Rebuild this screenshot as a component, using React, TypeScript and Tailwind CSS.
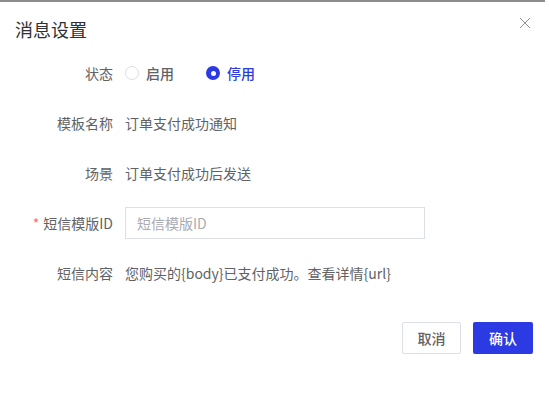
import React from 'react';

const font = { fontFamily: '"Noto Sans CJK SC", "Noto Sans", sans-serif' };

const FormRow: React.FC<{ label: string; required?: boolean; children: React.ReactNode }> = ({ label, required, children }) => (
    <div className="flex items-center h-8 mb-[18px]">
        <div className="w-[125px] pr-3 text-right text-[14px] text-[#606266] shrink-0">
            {required && <span className="text-[#f56c6c] mr-1">*</span>}
            {label}
        </div>
        <div className="flex items-center text-[14px] text-[#606266]">{children}</div>
    </div>
);

const Radio: React.FC<{ label: string; checked?: boolean }> = ({ label, checked }) => (
    <label className="flex items-center mr-[32px] cursor-pointer">
        {checked ? (
            <span className="w-[14px] h-[14px] rounded-full bg-[#2b3ae2] flex items-center justify-center">
                <span className="w-[5px] h-[5px] rounded-full bg-white" />
            </span>
        ) : (
            <span className="w-[14px] h-[14px] rounded-full border border-[#dcdfe6] bg-white" />
        )}
        <span className={`ml-[7px] font-medium ${checked ? 'text-[#2b3ae2]' : 'text-[#606266]'}`}>{label}</span>
    </label>
);

export default function App() {
    return (
        <div className="w-[549px] h-[404px] bg-white relative overflow-hidden" style={font}>
            <div className="h-[2px] bg-[#8c8c8c] w-[545px]" />
            <div className="flex items-center justify-between pl-[15px] pr-[18px] pt-[14px] h-[40px]">
                <h2 className="text-[18px] text-[#303133] leading-none">消息设置</h2>
                <button className="text-[#909399] -mt-[12px]">
                    <svg width="12" height="12" viewBox="0 0 12 12" fill="none" stroke="currentColor" strokeWidth="1">
                        <path d="M1 1L11 11M11 1L1 11" />
                    </svg>
                </button>
            </div>
            <div className="pt-[15px]">
                <FormRow label="状态">
                    <Radio label="启用" />
                    <Radio label="停用" checked />
                </FormRow>
                <FormRow label="模板名称">订单支付成功通知</FormRow>
                <FormRow label="场景">订单支付成功后发送</FormRow>
                <FormRow label="短信模版ID" required>
                    <input
                        className="w-[300px] h-8 border border-[#dcdfe6] px-[11px] text-[14px] text-[#606266] placeholder:text-[#a8abb2] outline-none"
                        placeholder="短信模版ID"
                        style={font}
                    />
                </FormRow>
                <FormRow label="短信内容">您购买的{'{body}'}已支付成功。查看详情{'{url}'}</FormRow>
            </div>
            <div className="flex justify-end gap-3 pr-4 mt-[33px]">
                <button className="w-[59px] h-[32px] border border-[#dcdfe6] rounded-[2px] text-[14px] text-[#606266] font-medium bg-white">取消</button>
                <button className="w-[60px] h-[32px] rounded-[2px] text-[14px] text-white font-medium bg-[#2b3ae2]">确认</button>
            </div>
        </div>
    );
}
